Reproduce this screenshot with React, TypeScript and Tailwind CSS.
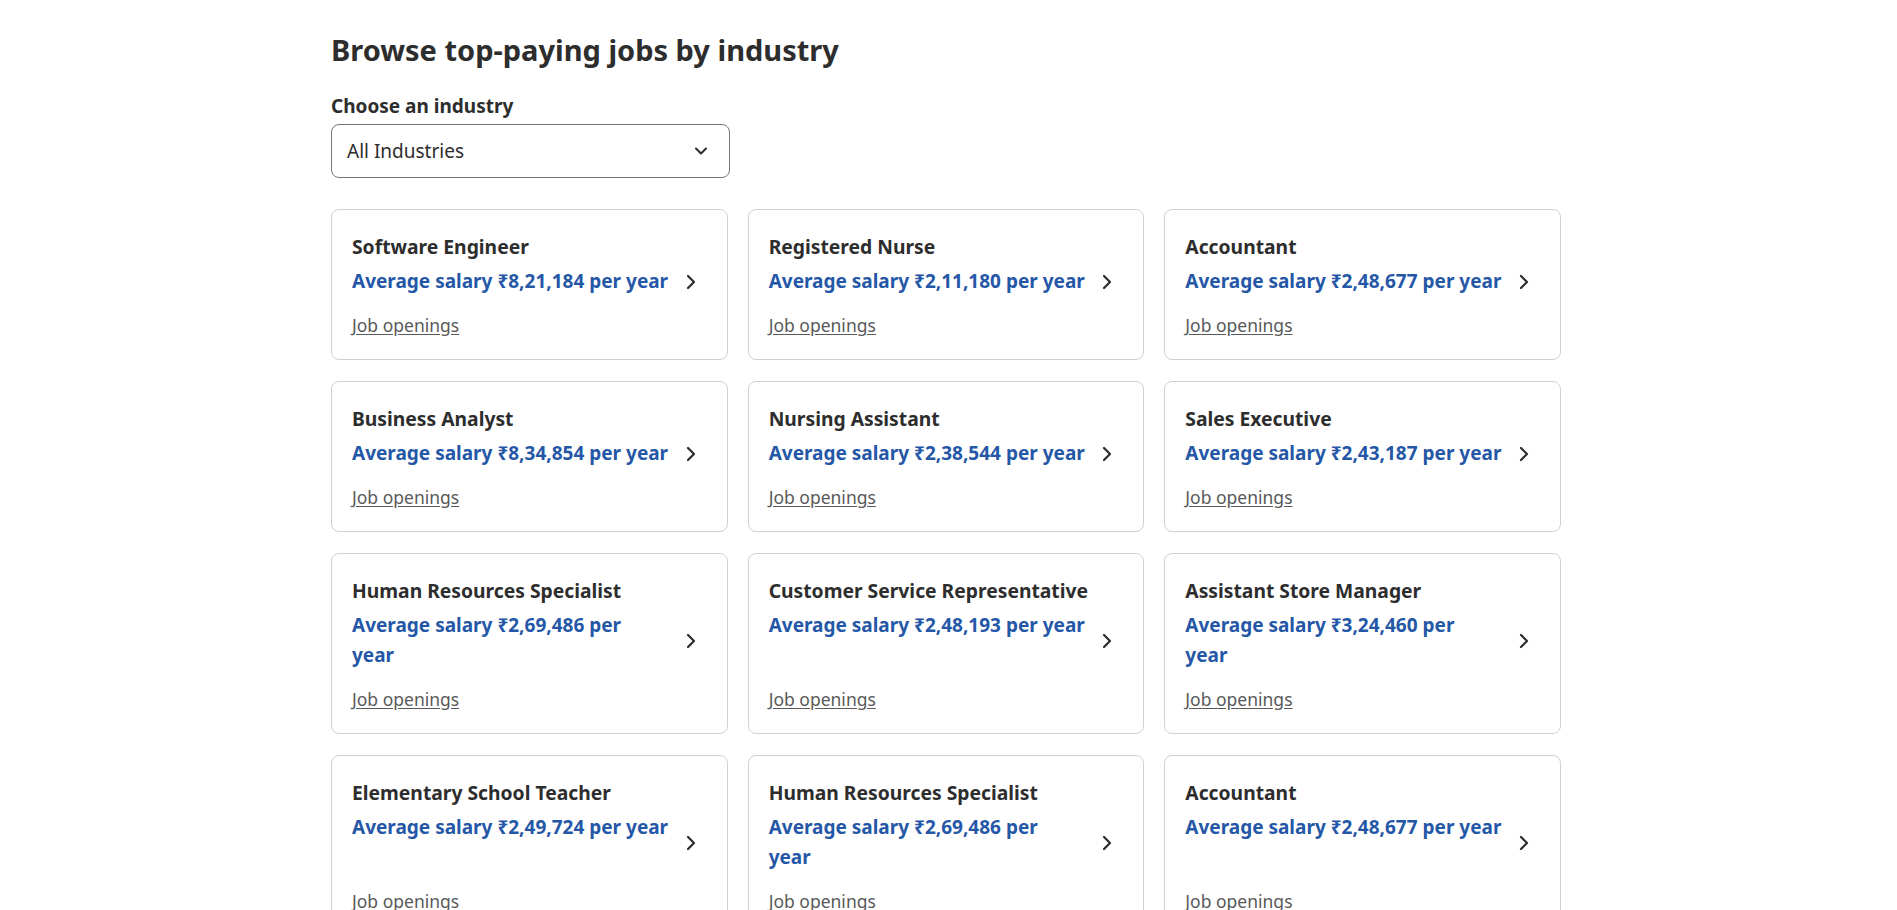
import { ChevronDown, ChevronRight } from "lucide-react"

interface Job {
  title: string
  salary: string
  wrap?: boolean
}

const jobs: Job[] = [
  { title: "Software Engineer", salary: "₹8,21,184" },
  { title: "Registered Nurse", salary: "₹2,11,180" },
  { title: "Accountant", salary: "₹2,48,677" },
  { title: "Business Analyst", salary: "₹8,34,854" },
  { title: "Nursing Assistant", salary: "₹2,38,544" },
  { title: "Sales Executive", salary: "₹2,43,187" },
  { title: "Human Resources Specialist", salary: "₹2,69,486", wrap: true },
  { title: "Customer Service Representative", salary: "₹2,48,193" },
  { title: "Assistant Store Manager", salary: "₹3,24,460", wrap: true },
  { title: "Elementary School Teacher", salary: "₹2,49,724" },
  { title: "Human Resources Specialist", salary: "₹2,69,486", wrap: true },
  { title: "Accountant", salary: "₹2,48,677" },
]

function JobCard({ job }: { job: Job }) {
  return (
    <a
      href="#"
      className="flex items-center rounded-lg border border-[#d4d2d0] bg-white pb-[22px] pl-5 pr-6 pt-[23px]"
    >
      <div className="flex flex-1 flex-col self-stretch">
        <h3 className="text-[19.3px] font-bold leading-[27px] text-[#2d2d2d]">{job.title}</h3>
        <p className="mt-[6px] max-w-[330px] text-[19px] font-bold leading-[30px] text-[#2557a7]">
          Average salary {job.salary} per{job.wrap ? <br /> : " "}year
        </p>
        <span className="mt-auto pt-[17px] text-[17.5px] leading-6 text-[#595959] underline underline-offset-2">
          Job openings
        </span>
      </div>
      <ChevronRight className="mb-[6px] h-6 w-6 shrink-0 text-[#2d2d2d]" strokeWidth={2.25} />
    </a>
  )
}

export default function App() {
  return (
    <div className="min-h-screen bg-white font-['Noto_Sans',sans-serif] text-[#2d2d2d]">
      <main className="ml-[331px] w-[1230px] pt-8">
        <h2 className="text-[29px] font-bold leading-[36px]">Browse top-paying jobs by industry</h2>

        <label className="mt-[26px] block text-[19px] font-bold leading-6">Choose an industry</label>
        <button className="mt-[6px] flex h-[54px] w-[399px] items-center justify-between rounded-lg border border-[#767676] pl-[15px] pr-[18px] text-[19px] text-[#2d2d2d]">
          All Industries
          <ChevronDown className="h-5 w-5" strokeWidth={2.5} />
        </button>

        <div className="mt-[31px] grid grid-cols-3 gap-x-5 gap-y-[21px]">
          {jobs.map((job, i) => (
            <JobCard key={i} job={job} />
          ))}
        </div>
      </main>
    </div>
  )
}
